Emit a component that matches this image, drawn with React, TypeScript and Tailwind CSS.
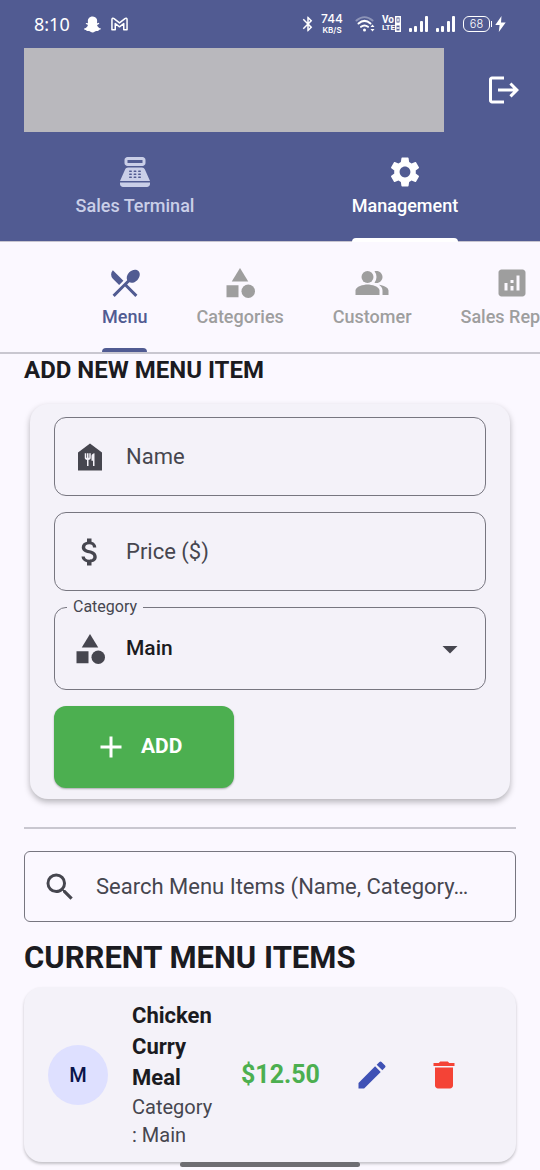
import type { ReactNode } from "react";
import { FaSnapchatGhost } from "react-icons/fa";
import {
  MdAdd,
  MdAnalytics,
  MdArrowDropDown,
  MdAttachMoney,
  MdBluetooth,
  MdCategory,
  MdDelete,
  MdEdit,
  MdFoodBank,
  MdLogout,
  MdPointOfSale,
  MdRestaurantMenu,
  MdSearch,
  MdSettings,
} from "react-icons/md";

function SignalBars() {
  return (
    <svg width="19" height="16" viewBox="0 0 19 16" fill="currentColor" aria-hidden="true">
      <rect x="0" y="12" width="3" height="4" rx="1" />
      <rect x="5" y="10" width="3" height="6" rx="1" />
      <rect x="11" y="5" width="3" height="11" rx="1" />
      <rect x="16" y="0" width="3" height="16" rx="1" />
    </svg>
  );
}

function GmailIcon() {
  return (
    <svg width="17" height="14" viewBox="0 0 18 14" fill="none" stroke="currentColor" strokeWidth="1.6" strokeLinejoin="round" aria-hidden="true">
      <path d="M1 13V2.200C1 .9 2.300.6 3.200 1.300L9 5.800L14.800 1.300C15.700.6 17 .9 17 2.200V13H13.500V6.500L9 10L4.500 6.500V13Z" />
    </svg>
  );
}

function WifiIcon() {
  return (
    <svg width="21" height="16" viewBox="0 0 21 16" fill="none" stroke="currentColor" strokeWidth="2" strokeLinecap="round" aria-hidden="true">
      <path d="M1.500 4.500C6.500 0 12.500 0 17.500 4.500" opacity=".35" />
      <path d="M3.500 7.500C7.500 4 11.500 4 15.500 7.500" />
      <path d="M6 10.800C8.300 9 10.700 9 13 10.800" />
      <circle cx="9.500" cy="14" r="1.500" fill="currentColor" stroke="none" />
      <path d="M15.500 11L17.500 8.500L19.500 11ZM15.500 13L17.500 15.500L19.500 13Z" fill="currentColor" stroke="none" />
    </svg>
  );
}

function SimBadge({ filled }: { filled: boolean }) {
  return (
    <svg width="6" height="8" viewBox="0 0 6 8" fill="none" stroke="currentColor" strokeWidth="1.500" aria-hidden="true">
      <rect x=".75" y=".75" width="4.500" height="6.500" />
      <path d={filled ? "M1.500 4H4.500" : "M3 2.500V5.500"} />
    </svg>
  );
}

function VolteIcon() {
  return (
    <span className="flex w-[19px] flex-col font-[Roboto,sans-serif] leading-[8px] font-bold">
      <span className="flex items-center justify-between text-[10px]">
        Vo
        <SimBadge filled={false} />
      </span>
      <span className="flex items-center justify-between text-[8px]">
        LTE
        <SimBadge filled />
      </span>
    </span>
  );
}

function BatteryIcon() {
  return (
    <span className="flex items-center gap-px">
      <span className="flex h-4 w-[27px] items-center justify-center rounded-md border border-white text-[11px] leading-none font-light">68</span>
      <span className="h-1.5 w-px bg-white" />
      <svg className="ml-0.5" width="11" height="16" viewBox="0 0 11 16" fill="currentColor" aria-hidden="true">
        <path d="M6.500 0L.3 9H4.600L3.800 16L10.700 6.500H6Z" />
      </svg>
    </span>
  );
}

function PeopleIcon({ size }: { size: number }) {
  return (
    <svg width={size} height={size} viewBox="0 0 24 24" fill="currentColor" aria-hidden="true">
      <path d="M16.670 13.130C18.040 14.060 19 15.320 19 17v3h4v-3c0-2.180-3.570-3.470-6.330-3.870z" />
      <circle cx="9" cy="8" r="4" />
      <path d="M15 12c2.210 0 4-1.790 4-4s-1.790-4-4-4c-.47 0-.91.1-1.330.24a5.980 5.980 0 0 1 0 7.520c.42.14.86.24 1.330.24z" />
      <path d="M9 13c-2.670 0-8 1.340-8 4v3h16v-3c0-2.660-5.330-4-8-4z" />
    </svg>
  );
}

function StatusBar() {
  return (
    <div className="flex h-12 items-center justify-between px-[34px] font-[Inter,sans-serif]">
      <div className="flex items-center gap-3.5">
        <span className="font-['Noto_Sans',sans-serif] text-lg">8:10</span>
        <div className="flex items-center gap-2.5">
          <FaSnapchatGhost size={17} aria-hidden="true" />
          <GmailIcon />
        </div>
      </div>
      <div className="flex items-center gap-2">
        <div className="flex items-center gap-1">
          <MdBluetooth size={18} aria-hidden="true" />
          <div className="flex flex-col items-center">
            <span className="text-xs leading-3 font-medium">744</span>
            <span className="text-[8px] leading-[10px] font-semibold">KB/S</span>
          </div>
        </div>
        <div className="flex items-center gap-1.5 pl-1">
          <WifiIcon />
          <VolteIcon />
        </div>
        <SignalBars />
        <SignalBars />
        <BatteryIcon />
      </div>
    </div>
  );
}

function Indicator({ className }: { className: string }) {
  return <span className={`absolute inset-x-0 bottom-0 h-1 rounded-t ${className}`} />;
}

const mainTabs: { label: string; icon: ReactNode; active: boolean }[] = [
  { label: "Sales Terminal", icon: <MdPointOfSale size={36} />, active: false },
  { label: "Management", icon: <MdSettings size={36} />, active: true },
];

const subTabs: { label: string; icon: ReactNode; active: boolean }[] = [
  { label: "Menu", icon: <MdRestaurantMenu size={36} />, active: true },
  { label: "Categories", icon: <MdCategory size={36} />, active: false },
  { label: "Customer", icon: <PeopleIcon size={36} />, active: false },
  { label: "Sales Report", icon: <MdAnalytics size={36} />, active: false },
];

function Header() {
  return (
    <header className="bg-[#515b92] text-white">
      <StatusBar />
      <div className="flex items-center pl-6">
        <div className="h-[84px] flex-1 bg-[#b9b8bd]" />
        <div className="flex w-24 justify-center pl-6">
          <button type="button" aria-label="Log out">
            <MdLogout size={36} />
          </button>
        </div>
      </div>
      <nav className="flex h-[110px] border-b border-[#c7c5d0]">
        {mainTabs.map(({ label, icon, active }) => (
          <button
            key={label}
            type="button"
            className={`-mb-px flex flex-1 justify-center text-lg font-medium ${active ? "text-white" : "text-[#cacfe8]"}`}
          >
            <span className="relative flex h-full flex-col items-center pt-[22px]">
              {icon}
              <span className="leading-8">{label}</span>
              {active && <Indicator className="bg-white" />}
            </span>
          </button>
        ))}
      </nav>
    </header>
  );
}

function SubTabs() {
  return (
    <nav className="flex h-28 gap-[49px] overflow-hidden border-b-2 border-[#c9c7d0] pl-[102px]">
      {subTabs.map(({ label, icon, active }) => (
        <button
          key={label}
          type="button"
          className={`relative flex shrink-0 flex-col items-center pt-[23px] text-lg font-medium ${active ? "text-[#515b92]" : "text-[#9e9e9e]"}`}
        >
          {icon}
          <span className="leading-8">{label}</span>
          {active && <Indicator className="bg-[#515b92]" />}
        </button>
      ))}
    </nav>
  );
}

function Field({ icon, label }: { icon: ReactNode; label: string }) {
  return (
    <label className="flex h-[79px] items-center gap-[18px] rounded-xl border border-[#777680] px-[17px] text-[#46464f]">
      {icon}
      <input
        type="text"
        aria-label={label}
        placeholder={label}
        className="min-w-0 flex-1 bg-transparent text-[22px] outline-none placeholder:text-[#46464f] placeholder:opacity-100"
      />
    </label>
  );
}

function AddForm() {
  return (
    <form
      onSubmit={(event) => event.preventDefault()}
      className="mx-1.5 flex flex-col gap-4 rounded-[18px] bg-[#f4f2f9] px-6 pt-[13px] pb-[11px] shadow-[0_3px_6px_rgba(0,0,0,0.28)]"
    >
      <Field icon={<MdFoodBank size={36} />} label="Name" />
      <Field icon={<MdAttachMoney size={36} />} label="Price ($)" />
      <div className="relative flex h-[83px] items-center rounded-xl border border-[#777680] pl-[17px] text-[#46464f]">
        <label htmlFor="category" className="absolute -top-[13px] left-3 bg-[#f4f2f9] px-1.5 text-base leading-6">
          Category
        </label>
        <MdCategory size={36} className="shrink-0" />
        <select
          id="category"
          defaultValue="Main"
          className="h-full min-w-0 flex-1 appearance-none bg-transparent pl-[18px] text-[21px] font-medium text-[#1b1b21] outline-none"
        >
          <option>Main</option>
          <option>Side</option>
          <option>Drink</option>
        </select>
        <MdArrowDropDown size={36} className="pointer-events-none absolute right-[17px]" />
      </div>
      <button
        type="submit"
        className="flex h-[82px] w-[180px] items-center gap-3 rounded-xl bg-[#4caf50] pl-[39px] text-[21px] font-bold text-white shadow-[0_1px_2px_rgba(0,0,0,0.3)]"
      >
        <MdAdd size={36} />
        ADD
      </button>
    </form>
  );
}

function MenuItemCard() {
  return (
    <li className="flex items-center rounded-[18px] bg-[#f4f2f9] py-[13px] pr-[54px] pl-6 shadow-[0_2px_3px_rgba(0,0,0,0.22)]">
      <div className="flex size-15 shrink-0 items-center justify-center rounded-full bg-[#dee0ff] text-xl font-medium text-[#0a154b]">
        M
      </div>
      <div className="ml-6 flex w-[85px] flex-col">
        <h3 className="text-[22px] leading-[31px] font-bold text-[#1b1b21]">Chicken Curry Meal</h3>
        <p className="text-xl leading-7 text-[#46464f]">
          Category
          <br />: Main
        </p>
      </div>
      <div className="ml-6 flex flex-1 items-center justify-between">
        <span className="text-[25px] font-bold text-[#4caf50]">$12.50</span>
        <div className="flex gap-9">
          <button type="button" aria-label="Edit Chicken Curry Meal" className="text-[#3f51b5]">
            <MdEdit size={36} />
          </button>
          <button type="button" aria-label="Delete Chicken Curry Meal" className="text-[#f44336]">
            <MdDelete size={36} />
          </button>
        </div>
      </div>
    </li>
  );
}

export default function App() {
  return (
    <div className="min-h-screen bg-[#fbf8ff] font-[Roboto,sans-serif] text-[#1b1b21]">
      <Header />
      <SubTabs />
      <main className="flex flex-col px-6 pb-2">
        <h2 className="mb-[18px] text-2xl leading-8 font-bold">ADD NEW MENU ITEM</h2>
        <AddForm />
        <hr className="mt-7 mb-[22px] border-t-2 border-[#c9c7d0]" />
        <label className="flex h-[71px] items-center gap-[18px] rounded-md border border-[#777680] px-[17px] text-[#46464f]">
          <MdSearch size={36} className="shrink-0" />
          <input
            type="search"
            aria-label="Search menu items"
            placeholder="Search Menu Items (Name, Category…"
            className="min-w-0 flex-1 bg-transparent text-[22px] outline-none placeholder:text-[#46464f] placeholder:opacity-100"
          />
        </label>
        <h2 className="mt-4 mb-[9px] text-[31px] leading-10 font-bold">CURRENT MENU ITEMS</h2>
        <ul>
          <MenuItemCard />
        </ul>
      </main>
      <div className="fixed bottom-[3px] left-1/2 h-[5px] w-1/3 -translate-x-1/2 rounded-full bg-[#6e6d72]" />
    </div>
  );
}
